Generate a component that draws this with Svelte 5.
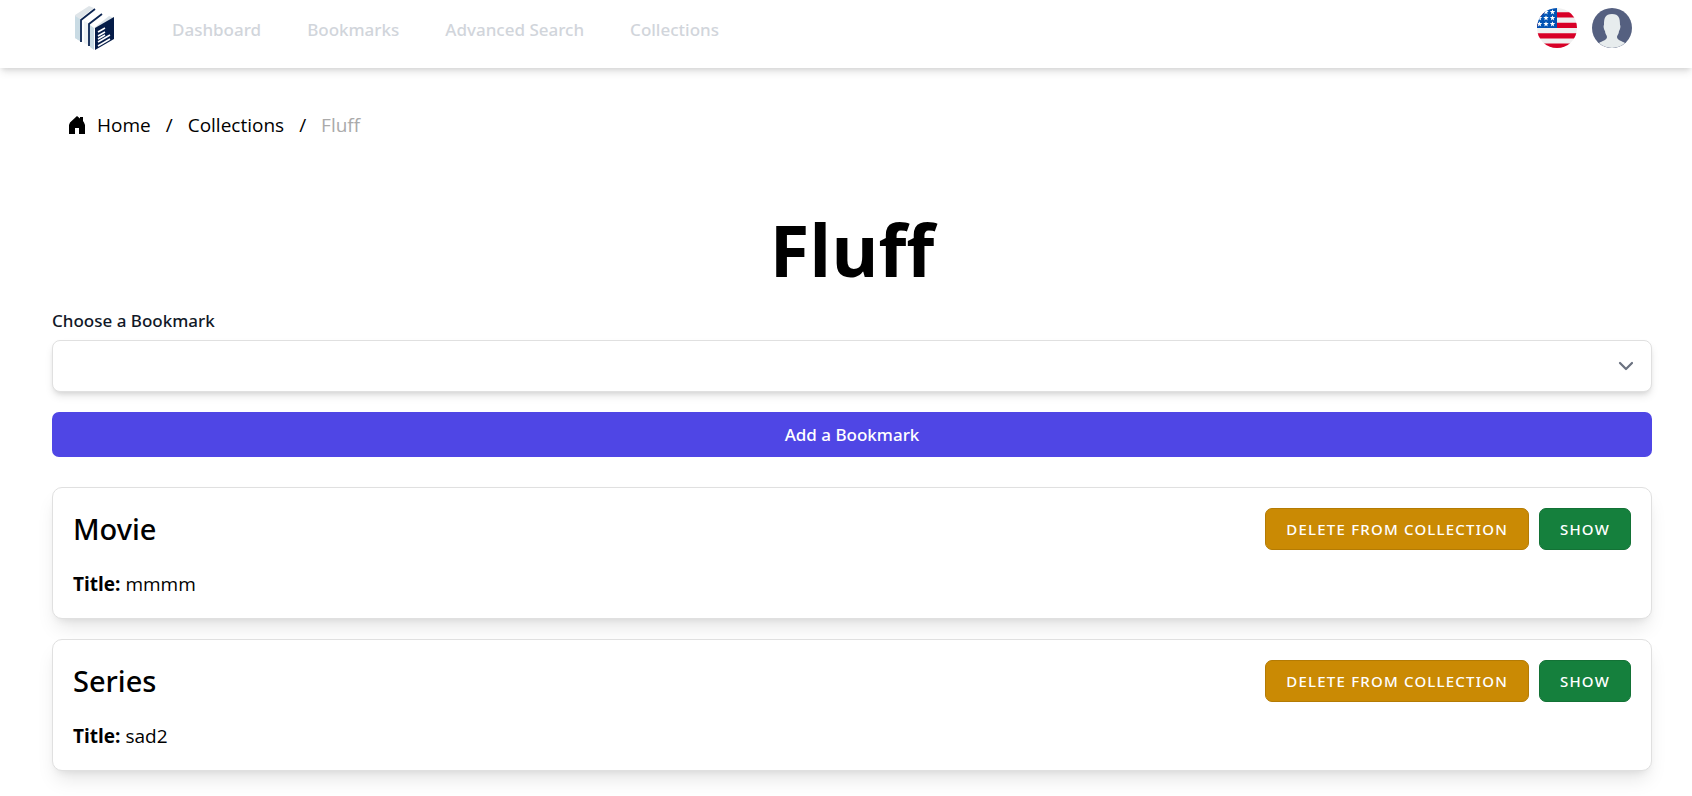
<script>
  const links = ['Dashboard', 'Bookmarks', 'Advanced Search', 'Collections'];
  const items = [
    { type: 'Movie', title: 'mmmm' },
    { type: 'Series', title: 'sad2' }
  ];
  const stars = [
    [9, 4], [15.500, 4],
    [2.500, 10], [9, 10], [15.500, 10],
    [2.500, 16], [9, 16], [15.500, 16]
  ];
</script>

<header>
  <nav aria-label="Main">
    <a class="logo" href="#home" aria-label="Home">
      <svg width="40" height="46" viewBox="0 0 40 46">
        <path d="M0 10 14 1l5 2L5 14v22l-5-3z" fill="#dfe5e9" />
        <path d="M0 11l5 3v22l-5-3z" fill="#c9dbe4" />
        <path d="M5 14 19 3l7 5-13 9v23l-8-4z" fill="#fff" />
        <path d="M9 16l4 2v22l-4-2z" fill="#eef2f4" />
        <path d="M13 17 26 8l6 1 7 4-19 11v21l-7-4z" fill="#fff" />
        <path d="M19 23 34 11l5 2-19 11z" fill="#dbe3e8" />
        <path d="M15 20l4 3v22l-4-3z" fill="#c9dbe4" />
        <path d="M6 37V15L20 4" stroke="#0b2451" stroke-width="1.800" fill="none" />
        <path d="M14 41V19L27 9" stroke="#0b2451" stroke-width="1.800" fill="none" />
        <path d="M20 23 39 12v22L20 45z" fill="#051c48" />
        <path d="M23 27l7-4M23 31l7-4M23 34l7-4M23 37l12-7M23 41l12-7" stroke="#fff" stroke-width="1.500" fill="none" />
      </svg>
    </a>
    <ul>
      {#each links as link}
        <li><a href="#{link}">{link}</a></li>
      {/each}
    </ul>
    <div class="tools">
      <button type="button" aria-label="Language">
        <svg width="40" height="40" viewBox="0 0 40 40">
          <clipPath id="disc"><circle cx="20" cy="20" r="20" /></clipPath>
          <g clip-path="url(#disc)">
            <rect width="40" height="40" fill="#f0f0f0" />
            <path d="M0 4.300h40v5.300H0zM0 14.800h40v5.200H0zM0 25.200h40v5.200H0zM0 35.600h40V40H0z" fill="#d80027" />
            <rect width="20" height="20" fill="#0052b4" />
            {#each stars as [x, y]}
              <path transform="translate({x} {y})" d="M0-2.700.7-.9h2L1.100.4l.6 2L0 1.200l-1.700 1.200.6-2L-2.700-.9h2z" fill="#fff" />
            {/each}
          </g>
        </svg>
      </button>
      <button type="button" aria-label="Profile">
        <svg width="40" height="40" viewBox="0 0 40 40">
          <circle cx="20" cy="20" r="20" fill="#556080" />
          <path d="M7 35c3-2 8-3 8-6 0-2-2-3-2-6-1-1-2-5-1-6 0-7 1-11 8-11s8 4 8 11c1 1 0 5-1 6 0 3-2 4-2 6 0 3 5 4 8 6-8 6.500-18 6.500-26 0z" fill="#e7eced" />
        </svg>
      </button>
    </div>
  </nav>
</header>

<main>
  <nav class="crumbs" aria-label="Breadcrumb">
    <a href="#home">
      <svg width="18" height="18" viewBox="0 0 18 18" aria-hidden="true">
        <path d="M9 0l3 2.500V1h3v4l1 1.500L17 9v9h-6v-6H7v6H1V9l1-2.500z" />
      </svg>
      Home
    </a>
    <span>/</span>
    <a href="#collections">Collections</a>
    <span>/</span>
    <span class="current" aria-current="page">Fluff</span>
  </nav>

  <h1>Fluff</h1>

  <form onsubmit={(e) => e.preventDefault()}>
    <label for="bookmark">Choose a Bookmark</label>
    <select id="bookmark"><option value=""></option></select>
    <button type="submit">Add a Bookmark</button>
  </form>

  <div class="cards">
    {#each items as item}
      <article>
        <div class="head">
          <h2>{item.type}</h2>
          <div class="actions">
            <button type="button" class="delete">Delete from collection</button>
            <button type="button" class="show">Show</button>
          </div>
        </div>
        <p><strong>Title:</strong> {item.title}</p>
      </article>
    {/each}
  </div>
</main>

<style>
  :global(body) {
    background: #fff;
    color: #000;
    font-family: 'Noto Sans', 'Open Sans', sans-serif;
    font-size: 18px;
    line-height: 28px;
  }
  a { color: inherit; text-decoration: none; }
  button { font: inherit; cursor: pointer; }
  h1, h2, p, ul { margin: 0; padding: 0; }
  svg { display: block; }

  header {
    box-shadow: 0 5px 8px -1px rgb(0 0 0 / 10%), 0 3px 5px -2px rgb(0 0 0 / 10%);
  }
  header nav {
    display: flex;
    align-items: flex-start;
    height: 68px;
    padding: 0 60px 0 75px;
    box-sizing: border-box;
  }
  .logo { padding-top: 5px; }
  ul {
    display: flex;
    gap: 46px;
    padding: 16px 0 0 57px;
    list-style: none;
    color: #d1d5db;
    font-size: 17px;
    font-weight: 500;
  }
  .tools {
    display: flex;
    gap: 15px;
    margin-left: auto;
    padding-top: 8px;
  }
  .tools button { padding: 0; border: 0; background: none; border-radius: 50%; }

  main { padding: 43px 40px 24px 52px; }
  .crumbs {
    display: flex;
    gap: 15px;
    padding-left: 16px;
    font-family: 'Open Sans', 'Noto Sans', sans-serif;
    font-size: 19px;
  }
  .crumbs a { display: flex; align-items: center; gap: 11px; }
  .current { color: #aaa; }

  h1 {
    padding: 70px 0 18px;
    font-family: 'Open Sans', 'Noto Sans', sans-serif;
    font-size: 72px;
    line-height: 80px;
    font-weight: 700;
    text-align: center;
  }

  form { display: flex; flex-direction: column; }
  label { font-size: 17px; font-weight: 500; padding-bottom: 5px; color: #111827; }
  select {
    height: 52px;
    padding: 0 50px 0 16px;
    border: 1px solid #e0e0e0;
    border-radius: 8px;
    appearance: none;
    font: inherit;
    background: #fff url("data:image/svg+xml,%3Csvg xmlns='http://www.w3.org/2000/svg' fill='none' viewBox='0 0 20 20'%3E%3Cpath stroke='%236b7280' stroke-linecap='round' stroke-linejoin='round' stroke-width='1.5' d='M6 8l4 4 4-4'/%3E%3C/svg%3E") right 10px center / 30px no-repeat;
    box-shadow: 0 5px 8px -1px rgb(0 0 0 / 10%), 0 3px 5px -2px rgb(0 0 0 / 10%);
  }
  form button {
    height: 45px;
    margin-top: 20px;
    border: 0;
    border-radius: 7px;
    background: #4f46e5;
    color: #fff;
    font-size: 17px;
    font-weight: 500;
  }

  .cards { display: grid; gap: 20px; padding-top: 30px; }
  article {
    padding: 20px;
    border: 1px solid #e0e0e0;
    border-radius: 10px;
    background: #fff;
    box-shadow: 0 12px 19px -4px rgb(0 0 0 / 10%), 0 5px 8px -5px rgb(0 0 0 / 10%);
  }
  .head { display: flex; justify-content: space-between; align-items: center; }
  h2 { font-size: 29px; line-height: 42px; font-weight: 500; }
  .actions { display: flex; gap: 10px; }
  .actions button {
    height: 42px;
    padding: 0 20px;
    border: 1px solid;
    border-radius: 7px;
    color: #fff;
    font-size: 15px;
    font-weight: 500;
    letter-spacing: 0.08em;
    text-transform: uppercase;
  }
  .actions .delete { background: #ca8a04; border-color: #b47b04; }
  .actions .show { background: #15803d; border-color: #137236; }
  p {
    padding-top: 20px;
    font-family: 'Open Sans', 'Noto Sans', sans-serif;
    font-size: 19px;
  }
</style>
